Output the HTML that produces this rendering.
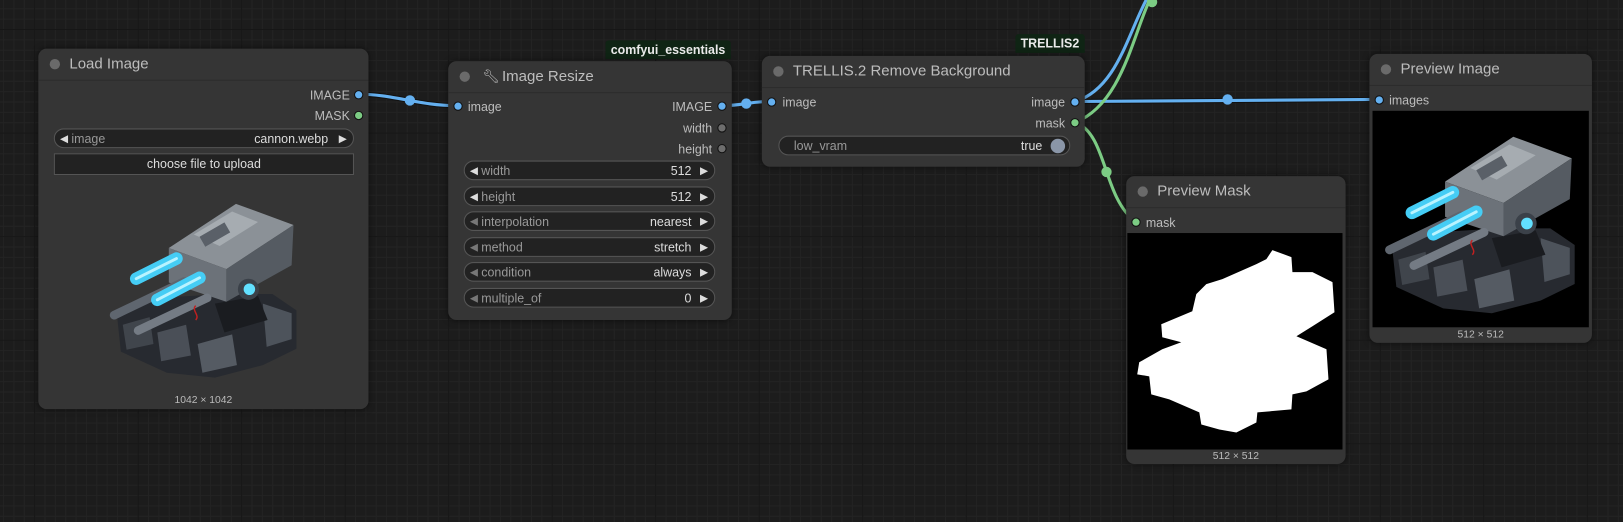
<!DOCTYPE html>
<html><head><meta charset="utf-8"><style>
html,body{margin:0;padding:0;width:1623px;height:522px;overflow:hidden;background:#1c1c1c;}
#w{position:absolute;left:0;top:0;width:1568px;height:504px;transform-origin:0 0;transform:scale(1.03508,1.03571);
background-color:#1c1c1c;
background-image:linear-gradient(#161616 1px,transparent 1px),linear-gradient(90deg,#161616 1px,transparent 1px),linear-gradient(#232323 1px,transparent 1px),linear-gradient(90deg,#232323 1px,transparent 1px);
background-size:100px 100px,100px 100px,10px 10px,10px 10px;background-position:-67px -72px,-67px -72px,-7px -2px,-7px -2px;
font-family:"Liberation Sans",sans-serif;}
.n{position:absolute;background:#353535;border-radius:8px;box-shadow:0 0 6px rgba(0,0,0,.5);}
.t{position:absolute;left:0;right:0;top:0;height:30px;border-bottom:1px solid #2c2c2c;color:#bdbdbd;font-size:14.5px;line-height:30px;padding-left:30px;}
.t:before{content:"";position:absolute;left:11px;top:10px;width:10px;height:10px;border-radius:50%;background:#6a6a6a;}
.s{position:absolute;font-size:12px;color:#bdbdbd;line-height:14px;}
.r{text-align:right;}
.d{position:absolute;width:7px;height:7px;border-radius:50%;border:1px solid #111;}
.b{background:#64b0f0}.g{background:#7ccc84}.k{background:#6e6e6e}
.wg{position:absolute;height:19px;border:1px solid #555;border-radius:10px;background:#222;font-size:12px;line-height:19px;color:#999;box-sizing:border-box;}
.wg .l{position:absolute;left:16px;top:0}
.wg .v{position:absolute;right:22px;top:0;color:#ddd}
.wg .al{position:absolute;left:5px;top:0;color:#ddd;font-size:10px}
.wg .ar{position:absolute;right:6px;top:0;color:#ddd;font-size:10px}
.dim .al{color:#777}
.badge{position:absolute;background:#0f2414;color:#eaeaea;font-size:12px;font-weight:bold;height:18px;line-height:18px;padding:0 5px;border-radius:3px 3px 0 0;}
.cap{position:absolute;font-size:10px;color:#bbb;text-align:center;}
</style></head><body><div id="w">
<svg width="0" height="0" style="position:absolute"><defs>
<symbol id="can" viewBox="5 5 205 190">
<polygon points="18,130 60,112 130,108 180,108 205,125 205,165 170,182 120,195 70,190 22,168" fill="#272a30"/>
<polygon points="24,140 52,132 56,160 28,166" fill="#40454c"/>
<polygon points="60,148 90,140 95,172 64,178" fill="#4a4f57"/>
<polygon points="102,160 138,150 143,182 107,190" fill="#555b63"/>
<polygon points="170,118 200,128 200,155 174,163" fill="#4d535b"/>
<polygon points="120,118 165,110 175,135 130,148" fill="#1a1c20"/>
<polygon points="72,60 142,14 202,36 132,82" fill="#8b9197"/>
<polygon points="132,82 202,36 200,78 132,116" fill="#555b62"/>
<polygon points="72,60 132,82 132,116 72,96" fill="#6c7279"/>
<polygon points="98,46 138,22 165,33 125,58" fill="#a6acb1"/>
<rect x="105" y="40" width="30" height="12" fill="#5a6068" transform="rotate(-30 120 46)"/>
<line x1="15" y1="130" x2="88" y2="95" stroke="#5f666f" stroke-width="9" stroke-linecap="round"/>
<line x1="40" y1="146" x2="112" y2="112" stroke="#747b84" stroke-width="9" stroke-linecap="round"/>
<line x1="38" y1="92" x2="80" y2="71" stroke="#45cdf5" stroke-width="13" stroke-linecap="round"/>
<line x1="38" y1="92" x2="80" y2="71" stroke="#b9f3ff" stroke-width="3" stroke-linecap="round"/>
<line x1="60" y1="114" x2="104" y2="91" stroke="#45cdf5" stroke-width="13" stroke-linecap="round"/>
<line x1="60" y1="114" x2="104" y2="91" stroke="#b9f3ff" stroke-width="3" stroke-linecap="round"/>
<circle cx="155" cy="103" r="11" fill="#3b4149"/><circle cx="156" cy="103" r="6" fill="#62e0ff"/>
<path d="M100,120 C95,125 105,130 100,135" stroke="#c02020" stroke-width="1.5" fill="none"/>
</symbol></defs></svg>

<svg style="position:absolute;left:0;top:0" width="1568" height="504">
<g fill="none" stroke-width="3">
<path d="M347,91 C380,91 405,102 441,102" stroke="#111" stroke-width="5"/>
<path d="M347,91 C380,91 405,102 441,102" stroke="#64b0f0"/>
<path d="M697,102 C720,102 722,98 745,98" stroke="#64b0f0"/>
<path d="M1039,98 L1332,96" stroke="#111" stroke-width="5"/>
<path d="M1039,98 L1332,96" stroke="#64b0f0"/>
<path d="M1039,98 C1080,85 1090,30 1110,-5" stroke="#64b0f0"/>
<path d="M1039,118 C1085,100 1095,30 1113,-5" stroke="#7ccc84"/>
<path d="M1039,118 C1070,130 1065,190 1097,214" stroke="#7ccc84"/>
</g>
<circle cx="396" cy="97" r="5" fill="#64b0f0"/><circle cx="721" cy="100" r="5" fill="#64b0f0"/>
<circle cx="1186" cy="96" r="5" fill="#64b0f0"/><circle cx="1069" cy="166" r="5" fill="#7ccc84"/>
<circle cx="1113" cy="2" r="5" fill="#7ccc84"/>
</svg>

<!-- Load Image -->
<div class="n" style="left:37px;top:47px;width:319px;height:348px">
<div class="t">Load Image</div>
<div class="s r" style="right:18px;top:38px">IMAGE</div><div class="d b" style="right:5px;top:40px"></div>
<div class="s r" style="right:18px;top:58px">MASK</div><div class="d g" style="right:5px;top:60px"></div>
<div class="wg" style="left:15px;top:77px;width:290px"><span class="al">◀</span><span class="l">image</span><span class="v" style="right:24px">cannon.webp</span><span class="ar">▶</span></div>
<div style="position:absolute;left:15px;top:101px;width:288px;height:19px;border:1px solid #555;background:#222;color:#ddd;font-size:12px;text-align:center;line-height:19px">choose file to upload</div>
<svg style="position:absolute;left:64px;top:141px" width="190" height="177"><use href="#can"/></svg>
<div class="cap" style="left:0;right:0;top:334px">1042 × 1042</div>
</div>

<!-- Image Resize -->
<div class="badge" style="left:585px;top:39px">comfyui_essentials</div>
<div class="n" style="left:433px;top:59px;width:274px;height:250px">
<div class="t" style="padding-left:52px">Image Resize</div>
<div style="position:absolute;left:33px;top:7px;color:#bbb;font-size:13px">🔧︎</div>
<div class="d b" style="left:5px;top:39px"></div><div class="s" style="left:19px;top:37px">image</div>
<div class="s r" style="right:19px;top:37px">IMAGE</div><div class="d b" style="right:5px;top:39px"></div>
<div class="s r" style="right:19px;top:58px">width</div><div class="d k" style="right:5px;top:60px"></div>
<div class="s r" style="right:19px;top:78px">height</div><div class="d k" style="right:5px;top:80px"></div>
<div class="wg" style="left:15px;top:96px;width:243px"><span class="al">◀</span><span class="l">width</span><span class="v">512</span><span class="ar">▶</span></div>
<div class="wg" style="left:15px;top:121px;width:243px"><span class="al">◀</span><span class="l">height</span><span class="v">512</span><span class="ar">▶</span></div>
<div class="wg dim" style="left:15px;top:145px;width:243px"><span class="al">◀</span><span class="l">interpolation</span><span class="v">nearest</span><span class="ar">▶</span></div>
<div class="wg dim" style="left:15px;top:170px;width:243px"><span class="al">◀</span><span class="l">method</span><span class="v">stretch</span><span class="ar">▶</span></div>
<div class="wg dim" style="left:15px;top:194px;width:243px"><span class="al">◀</span><span class="l">condition</span><span class="v">always</span><span class="ar">▶</span></div>
<div class="wg dim" style="left:15px;top:219px;width:243px"><span class="al">◀</span><span class="l">multiple_of</span><span class="v">0</span><span class="ar">▶</span></div>
</div>

<!-- TRELLIS -->
<div class="badge" style="left:981px;top:33px">TRELLIS2</div>
<div class="n" style="left:736px;top:54px;width:312px;height:107px">
<div class="t">TRELLIS.2 Remove Background</div>
<div class="d b" style="left:5px;top:40px"></div><div class="s" style="left:20px;top:38px">image</div>
<div class="s r" style="right:19px;top:38px">image</div><div class="d b" style="right:5px;top:40px"></div>
<div class="s r" style="right:19px;top:58px">mask</div><div class="d g" style="right:5px;top:60px"></div>
<div class="wg" style="left:16px;top:77px;width:282px"><span class="l" style="left:14px">low_vram</span><span class="v" style="right:26px">true</span><span style="position:absolute;right:4px;top:2px;width:14px;height:14px;border-radius:50%;background:#8a96a8"></span></div>
</div>

<!-- Preview Mask -->
<div class="n" style="left:1088px;top:170px;width:212px;height:278px">
<div class="t">Preview Mask</div>
<div class="d g" style="left:5px;top:40px"></div><div class="s" style="left:19px;top:38px">mask</div>
<svg style="position:absolute;left:1px;top:55px" width="208" height="209" viewBox="0 0 215 216" preserveAspectRatio="none">
<rect width="215" height="216" fill="#000"/>
<polygon fill="#fff" points="145,17 164,24 165,39 185,39 205,49 207,79 185,93 169,103 199,116 201,146 179,158 165,161 164,176 130,179 129,189 109,199 92,196 74,191 72,179 42,166 24,161 22,143 10,141 12,129 35,116 54,109 35,104 34,91 65,78 69,61 79,51 95,46 129,31 139,26"/>
</svg>
<div class="cap" style="left:0;right:0;top:265px">512 × 512</div>
</div>

<!-- Preview Image -->
<div class="n" style="left:1323px;top:52px;width:215px;height:279px">
<div class="t">Preview Image</div>
<div class="d b" style="left:5px;top:40px"></div><div class="s" style="left:19px;top:38px">images</div>
<div style="position:absolute;left:3px;top:55px;width:209px;height:209px;background:#000;overflow:hidden">
<svg style="position:absolute;left:7px;top:16px" width="193" height="180"><use href="#can"/></svg>
</div>
<div class="cap" style="left:0;right:0;top:266px">512 × 512</div>
</div>
</div></body></html>
